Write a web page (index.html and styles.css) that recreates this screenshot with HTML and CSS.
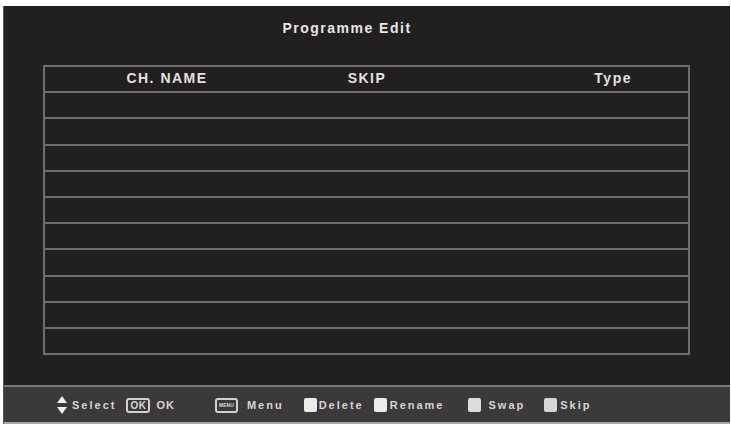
FILE: index.html
```html
<!DOCTYPE html>
<html>
<head>
<meta charset="utf-8">
<link rel="stylesheet" href="styles.css">
</head>
<body>
<div class="screen">
  <div class="main">
    <div class="title">Programme Edit</div>
    <div class="table">
      <div class="row head">
        <div class="c1">CH. NAME</div>
        <div class="c2">SKIP</div>
        <div class="c3">Type</div>
      </div>
      <div class="row"></div>
      <div class="row"></div>
      <div class="row"></div>
      <div class="row"></div>
      <div class="row"></div>
      <div class="row"></div>
      <div class="row"></div>
      <div class="row"></div>
      <div class="row"></div>
      <div class="row"></div>
    </div>
  </div>
  <div class="bar">
    <svg class="arrows" width="10" height="19" viewBox="0 0 10 19"><polygon points="5,0 10,7 0,7" fill="#f2f2f2"/><polygon points="0,11 10,11 5,18" fill="#f2f2f2"/></svg>
    <span class="lbl l-select">Select</span>
    <span class="key k-ok">OK</span>
    <span class="lbl l-ok">OK</span>
    <span class="key k-menu">MENU</span>
    <span class="lbl l-menu">Menu</span>
    <span class="sq s-del"></span>
    <span class="lbl l-del">Delete</span>
    <span class="sq s-ren"></span>
    <span class="lbl l-ren">Rename</span>
    <span class="sq s-swap"></span>
    <span class="lbl l-swap">Swap</span>
    <span class="sq s-skip"></span>
    <span class="lbl l-skip">Skip</span>
  </div>
</div>
</body>
</html>
```
FILE: styles.css
```css
html, body {
  margin: 0;
  padding: 0;
  background: #ffffff;
}
body {
  width: 731px;
  height: 424px;
  overflow: hidden;
  font-family: "Liberation Sans", Arial, sans-serif;
}
.screen {
  margin: 6px 1px 0 3px;
  width: 727px;
  height: 418px;
  display: flex;
  flex-direction: column;
  background: #221f20;
  border-left: 1px solid #5a5859;
  box-sizing: border-box;
}
.main {
  height: 379px;
  display: flex;
  flex-direction: column;
  box-sizing: border-box;
  padding-top: 13px;
}
.title {
  color: #e6e6e6;
  font-weight: bold;
  font-size: 14px;
  line-height: 18px;
  letter-spacing: 1.5px;
  text-align: center;
  margin-left: -40px;
}
.table {
  margin-top: 28px;
  margin-left: 39px;
  width: 647px;
  height: 290px;
  box-sizing: border-box;
  border: 2px solid #6e6c6d;
  display: flex;
  flex-direction: column;
}
.row {
  flex: 1;
  border-top: 2px solid #6e6c6d;
  display: grid;
  grid-template-columns: 250px 144px 1fr;
  align-items: center;
}
.row.head {
  border-top: none;
}
.head div {
  color: #e2e2e2;
  font-weight: bold;
  font-size: 14px;
  letter-spacing: 1.5px;
  text-align: center;
  margin-top: -2px;
}
.head .c1 { padding-right: 6px; }
.head .c3 {
  text-align: right;
  padding-right: 56px;
}
.bar {
  height: 39px;
  box-sizing: border-box;
  border-top: 2px solid #7a7879;
  border-bottom: 2px solid #a9a7a8;
  background: #3b393a;
  display: flex;
  align-items: center;
  padding-top: 1px;
}
.lbl {
  color: #d6d6d6;
  font-weight: bold;
  font-size: 11px;
  letter-spacing: 2px;
  line-height: 14px;
}
.arrows {
  margin-left: 53px;
}
.l-select { margin-left: 5px; }
.key {
  box-sizing: border-box;
  height: 15px;
  border: 2px solid #d0d0d0;
  border-radius: 3px;
  color: #d8d8d8;
  font-weight: bold;
  display: flex;
  align-items: center;
  justify-content: center;
}
.k-ok {
  width: 24px;
  margin-left: 10px;
  font-size: 10px;
  letter-spacing: 0.5px;
}
.l-ok { margin-left: 6px; letter-spacing: 1px; }
.k-menu {
  width: 23px;
  margin-left: 40px;
  font-size: 5px;
  letter-spacing: 0;
}
.l-menu { margin-left: 9px; }
.sq {
  width: 13px;
  height: 14px;
  background: #ececec;
  border-radius: 2px;
}
.s-del { margin-left: 20px; }
.l-del { margin-left: 2px; }
.s-ren { margin-left: 10px; }
.l-ren { margin-left: 3px; }
.s-swap { margin-left: 24px; background: #dcdcdc; }
.l-swap { margin-left: 7px; }
.s-skip { margin-left: 19px; background: #d6d6d6; }
.l-skip { margin-left: 3px; }
```
